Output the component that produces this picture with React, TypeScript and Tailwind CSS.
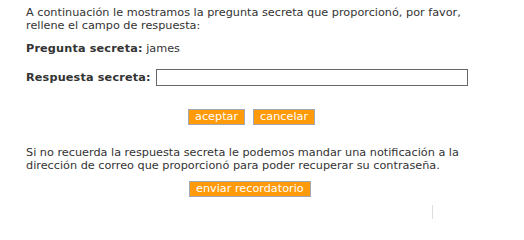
export default function App() {
  const btn =
    'border border-[#a3a9b0] bg-[#ff9a0a] px-[6px] text-[11.25px] leading-[14px] text-white'

  return (
    <div className="h-[220px] w-[524px] bg-white pl-[26px] pt-[6px] font-['Verdana','DejaVu_Sans',sans-serif] text-[11.25px] leading-[13px] text-[#333]">
      <p className="w-[470px]">
        A continuación le mostramos la pregunta secreta que proporcionó, por favor, rellene el campo de respuesta:
      </p>

      <p className="mt-[10px]">
        <b className="tracking-[0.15px]">Pregunta secreta:</b> james
      </p>

      <div className="mt-[14px] flex items-center">
        <b className="w-[130px] tracking-[0.15px]">Respuesta secreta:</b>
        <input type="text" className="h-[17px] w-[312px] border border-[#666] bg-white px-1 text-[11px] outline-none" />
      </div>

      <div className="mt-[23px] flex gap-[8px] pl-[162px]">
        <button className={btn}>aceptar</button>
        <button className={btn}>cancelar</button>
      </div>

      <p className="mt-[21px] w-[470px]">
        Si no recuerda la respuesta secreta le podemos mandar una notificación a la dirección de correo que proporcionó para poder recuperar su contraseña.
      </p>

      <div className="mt-[9px] pl-[163px]">
        <button className={btn}>enviar recordatorio</button>
      </div>

      <div className="ml-[406px] mt-[8px] h-[14px] w-px bg-[#ddd]" />
    </div>
  )
}
